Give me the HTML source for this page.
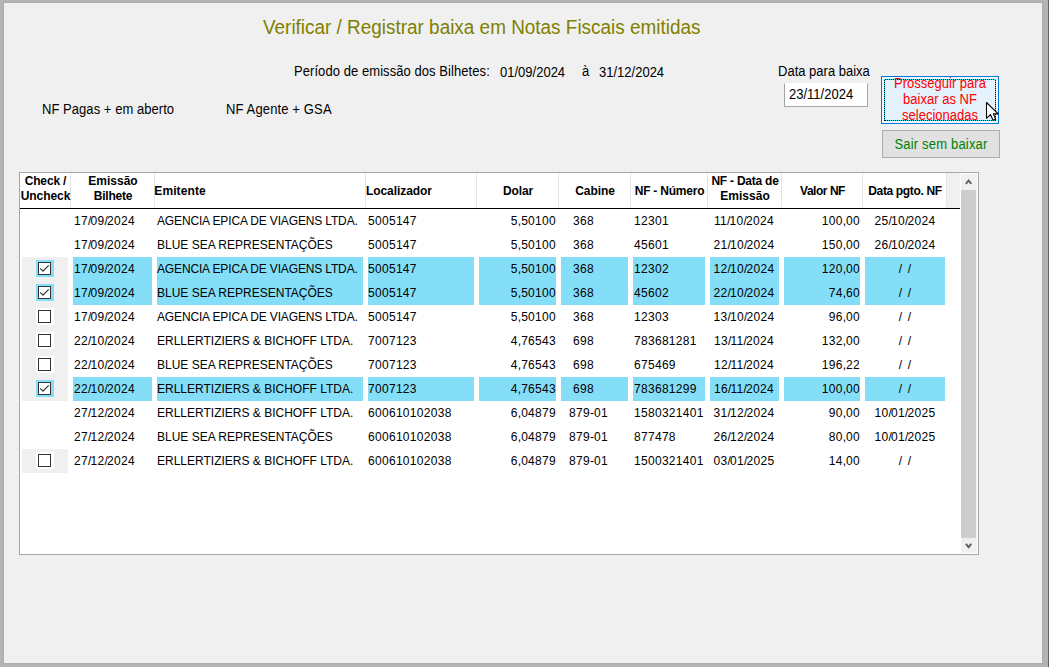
<!DOCTYPE html>
<html><head><meta charset="utf-8"><style>
*{margin:0;padding:0;box-sizing:border-box}
html,body{width:1050px;height:667px;overflow:hidden;background:#b4b4b4;font-family:"Liberation Sans",sans-serif;color:#000}
.a{position:absolute}
.t{position:absolute;white-space:pre;line-height:16px}
.hd{position:absolute;font-weight:bold;font-size:12px;line-height:15px;letter-spacing:-0.35px;text-align:center;white-space:pre}
.c{position:absolute;white-space:pre;font-size:12px;line-height:24px;height:24px}
.d{letter-spacing:0.3px}
.sl{letter-spacing:-0.8px}
</style></head><body>

<div class="a" style="left:3px;top:2px;width:1040px;height:662px;background:#adadad"></div>
<div class="a" style="left:4px;top:3px;width:1038px;height:660px;background:#f3f3f3"></div>
<div class="a" style="left:5px;top:4px;width:1036px;height:658px;background:#f0f0f0"></div>
<div class="a" style="left:1048px;top:0;width:1px;height:667px;background:#646464"></div>
<div class="a" style="left:1049px;top:0;width:1px;height:667px;background:#fff"></div>
<div class="t" style="left:262.7px;top:16px;font-size:20px;line-height:22px;color:#808000;transform:scaleX(0.946);transform-origin:0 0">Verificar / Registrar baixa em Notas Fiscais emitidas</div>
<div class="t" style="left:294px;top:63px;font-size:14px;transform:scaleX(0.929);transform-origin:0 0;letter-spacing:0.07px">Período de emissão dos Bilhetes:</div>
<div class="t" style="left:500px;top:64px;font-size:14px;transform:scaleX(0.929);transform-origin:0 0">01/09/2024</div>
<div class="t" style="left:582px;top:63px;font-size:14px;transform:scaleX(0.929);transform-origin:0 0">à</div>
<div class="t" style="left:599px;top:64px;font-size:14px;transform:scaleX(0.929);transform-origin:0 0">31/12/2024</div>
<div class="t" style="left:42px;top:101px;font-size:14px;transform:scaleX(0.929);transform-origin:0 0;letter-spacing:0.05px">NF Pagas + em aberto</div>
<div class="t" style="left:226px;top:101px;font-size:14px;transform:scaleX(0.929);transform-origin:0 0;letter-spacing:0.14px">NF Agente + GSA</div>
<div class="t" style="left:778px;top:63px;font-size:14px;transform:scaleX(0.929);transform-origin:0 0">Data para baixa</div>
<div class="a" style="left:784px;top:83px;width:84px;height:24px;background:#fff;border:1px solid #a3a3a8;border-top-color:#fff"></div>
<div class="t" style="left:789px;top:86px;font-size:14px;transform:scaleX(0.929);transform-origin:0 0">23/11/2024</div>
<div class="a" style="left:881px;top:76px;width:118px;height:48px;background:#e5f1fb;border:1px solid #0078d7"></div>
<div class="a" style="left:882px;top:77px;width:116px;height:46px;background:#f2f8fd"></div>
<div class="a" style="left:884px;top:79px;width:112px;height:42px;background:#e5f1fb"></div>
<div class="a" style="left:884px;top:79px;width:112px;height:1px;background:repeating-linear-gradient(90deg,#1ee8ee 0 1px,#000 1px 2px)"></div>
<div class="a" style="left:884px;top:120px;width:112px;height:1px;background:repeating-linear-gradient(90deg,#1ee8ee 0 1px,#000 1px 2px)"></div>
<div class="a" style="left:884px;top:79px;width:1px;height:42px;background:repeating-linear-gradient(180deg,#1ee8ee 0 1px,#000 1px 2px)"></div>
<div class="a" style="left:995px;top:79px;width:1px;height:42px;background:repeating-linear-gradient(180deg,#1ee8ee 0 1px,#000 1px 2px)"></div>
<div class="t" style="left:881px;top:75px;width:127px;font-size:14px;line-height:16px;text-align:center;color:#ff0000;transform:scaleX(0.929);transform-origin:0 0">Prosseguir para
baixar as NF
selecionadas</div>
<svg class="a" style="left:985px;top:101px" width="16" height="22"><path d="M1.5,1.5 L1.5,17.3 L5.4,13.6 L8.1,19.3 L10.6,18.2 L8.3,12.9 L13.2,12.9 Z" fill="#fff" stroke="#000" stroke-width="1.1" stroke-linejoin="round"/></svg>
<div class="a" style="left:882px;top:130px;width:118px;height:28px;background:#e1e1e1;border:1px solid #adadad"></div>
<div class="t" style="left:881.5px;top:136px;width:127px;font-size:14px;text-align:center;color:#008000;transform:scaleX(0.929);transform-origin:0 0;letter-spacing:0.2px">Sair sem baixar</div>
<div class="a" style="left:19px;top:172px;width:960px;height:383px;background:#fff;border:1px solid #a5a5ac"></div>
<div class="a" style="left:70px;top:173px;width:1px;height:34px;background:#e4e4e4"></div>
<div class="a" style="left:154px;top:173px;width:1px;height:34px;background:#e4e4e4"></div>
<div class="a" style="left:365px;top:173px;width:1px;height:34px;background:#e4e4e4"></div>
<div class="a" style="left:476px;top:173px;width:1px;height:34px;background:#e4e4e4"></div>
<div class="a" style="left:558px;top:173px;width:1px;height:34px;background:#e4e4e4"></div>
<div class="a" style="left:630px;top:173px;width:1px;height:34px;background:#e4e4e4"></div>
<div class="a" style="left:707px;top:173px;width:1px;height:34px;background:#e4e4e4"></div>
<div class="a" style="left:781px;top:173px;width:1px;height:34px;background:#e4e4e4"></div>
<div class="a" style="left:862px;top:173px;width:1px;height:34px;background:#e4e4e4"></div>
<div class="a" style="left:946px;top:173px;width:1px;height:34px;background:#e4e4e4"></div>
<div class="a" style="left:947px;top:173px;width:13px;height:35px;background:#f0f0f0"></div>
<div class="a" style="left:20px;top:208px;width:940px;height:1px;background:#000"></div>
<div class="hd" style="left:20px;top:173.5px;width:51px;letter-spacing:-0.15px">Check /</div>
<div class="hd" style="left:20px;top:188.5px;width:51px;letter-spacing:-0.05px">Uncheck</div>
<div class="hd" style="left:71px;top:173.5px;width:84px;letter-spacing:0.0px">Emissão</div>
<div class="hd" style="left:71px;top:188.5px;width:84px;letter-spacing:-0.2px">Bilhete</div>
<div class="hd" style="left:154.3px;top:184.0px;text-align:left;letter-spacing:0.1px">Emitente</div>
<div class="hd" style="left:366px;top:184.0px;text-align:left;letter-spacing:-0.07px">Localizador</div>
<div class="hd" style="left:477px;top:184.0px;width:82px;letter-spacing:-0.15px">Dolar</div>
<div class="hd" style="left:559px;top:184.0px;width:72px;letter-spacing:-0.05px">Cabine</div>
<div class="hd" style="left:631px;top:184.0px;width:77px;letter-spacing:-0.22px">NF - Número</div>
<div class="hd" style="left:708px;top:173.5px;width:74px;letter-spacing:-0.23px">NF - Data de</div>
<div class="hd" style="left:708px;top:188.5px;width:74px;letter-spacing:0.02px">Emissão</div>
<div class="hd" style="left:782px;top:184.0px;width:81px;letter-spacing:-0.47px">Valor NF</div>
<div class="hd" style="left:863px;top:184.0px;width:84px;letter-spacing:-0.35px">Data pgto. NF</div>
<div class="c" style="left:74px;top:209px"><span class="d">17</span><span class="sl">/</span><span class="d">09</span><span class="sl">/</span><span class="d">2024</span></div>
<div class="c" style="left:157px;top:209px;letter-spacing:-0.15px">AGENCIA EPICA DE VIAGENS LTDA.</div>
<div class="c" style="left:368px;top:209px"><span class="d">5005147</span></div>
<div class="c" style="left:477px;top:209px;width:79px;text-align:right"><span class="d">5</span>,<span class="d">50100</span></div>
<div class="c" style="left:573px;top:209px"><span class="d">368</span></div>
<div class="c" style="left:634px;top:209px"><span class="d">12301</span></div>
<div class="c" style="left:707px;top:209px;width:74px;text-align:center"><span class="d">11</span><span class="sl">/</span><span class="d">10</span><span class="sl">/</span><span class="d">2024</span></div>
<div class="c" style="left:782px;top:209px;width:78px;text-align:right"><span class="d">100</span>,<span class="d">00</span></div>
<div class="c" style="left:863px;top:209px;width:84px;text-align:center"><span class="d">25</span><span class="sl">/</span><span class="d">10</span><span class="sl">/</span><span class="d">2024</span></div>
<div class="c" style="left:74px;top:233px"><span class="d">17</span><span class="sl">/</span><span class="d">09</span><span class="sl">/</span><span class="d">2024</span></div>
<div class="c" style="left:157px;top:233px">BLUE SEA REPRESENTAÇÕES</div>
<div class="c" style="left:368px;top:233px"><span class="d">5005147</span></div>
<div class="c" style="left:477px;top:233px;width:79px;text-align:right"><span class="d">5</span>,<span class="d">50100</span></div>
<div class="c" style="left:573px;top:233px"><span class="d">368</span></div>
<div class="c" style="left:634px;top:233px"><span class="d">45601</span></div>
<div class="c" style="left:707px;top:233px;width:74px;text-align:center"><span class="d">21</span><span class="sl">/</span><span class="d">10</span><span class="sl">/</span><span class="d">2024</span></div>
<div class="c" style="left:782px;top:233px;width:78px;text-align:right"><span class="d">150</span>,<span class="d">00</span></div>
<div class="c" style="left:863px;top:233px;width:84px;text-align:center"><span class="d">26</span><span class="sl">/</span><span class="d">10</span><span class="sl">/</span><span class="d">2024</span></div>
<div class="a" style="left:22px;top:257px;width:46px;height:24px;background:#f0f0f0"></div>
<div class="a" style="left:36px;top:260px;width:18px;height:17px;background:#85def8"></div>
<svg class="a" style="left:38px;top:262px" width="13" height="13"><rect x="0.5" y="0.5" width="12" height="12" fill="#fff" stroke="#333"/><polyline points="2.2,6.4 5,9.2 10.7,3.4" fill="none" stroke="#333" stroke-width="1.25"/></svg>
<div class="a" style="left:73px;top:257px;width:79px;height:24px;background:#85def8"></div>
<div class="a" style="left:157px;top:257px;width:206px;height:24px;background:#85def8"></div>
<div class="a" style="left:368px;top:257px;width:106px;height:24px;background:#85def8"></div>
<div class="a" style="left:479px;top:257px;width:77px;height:24px;background:#85def8"></div>
<div class="a" style="left:561px;top:257px;width:67px;height:24px;background:#85def8"></div>
<div class="a" style="left:633px;top:257px;width:72px;height:24px;background:#85def8"></div>
<div class="a" style="left:710px;top:257px;width:69px;height:24px;background:#85def8"></div>
<div class="a" style="left:784px;top:257px;width:76px;height:24px;background:#85def8"></div>
<div class="a" style="left:865px;top:257px;width:80px;height:24px;background:#85def8"></div>
<div class="c" style="left:74px;top:257px"><span class="d">17</span><span class="sl">/</span><span class="d">09</span><span class="sl">/</span><span class="d">2024</span></div>
<div class="c" style="left:157px;top:257px;letter-spacing:-0.15px">AGENCIA EPICA DE VIAGENS LTDA.</div>
<div class="c" style="left:368px;top:257px"><span class="d">5005147</span></div>
<div class="c" style="left:477px;top:257px;width:79px;text-align:right"><span class="d">5</span>,<span class="d">50100</span></div>
<div class="c" style="left:573px;top:257px"><span class="d">368</span></div>
<div class="c" style="left:634px;top:257px"><span class="d">12302</span></div>
<div class="c" style="left:707px;top:257px;width:74px;text-align:center"><span class="d">12</span><span class="sl">/</span><span class="d">10</span><span class="sl">/</span><span class="d">2024</span></div>
<div class="c" style="left:782px;top:257px;width:78px;text-align:right"><span class="d">120</span>,<span class="d">00</span></div>
<div class="c" style="left:863px;top:257px;width:84px;text-align:center">/<span style="display:inline-block;width:5.7px"></span>/</div>
<div class="a" style="left:22px;top:281px;width:46px;height:24px;background:#f0f0f0"></div>
<div class="a" style="left:36px;top:284px;width:18px;height:17px;background:#85def8"></div>
<svg class="a" style="left:38px;top:286px" width="13" height="13"><rect x="0.5" y="0.5" width="12" height="12" fill="#fff" stroke="#333"/><polyline points="2.2,6.4 5,9.2 10.7,3.4" fill="none" stroke="#333" stroke-width="1.25"/></svg>
<div class="a" style="left:73px;top:281px;width:79px;height:24px;background:#85def8"></div>
<div class="a" style="left:157px;top:281px;width:206px;height:24px;background:#85def8"></div>
<div class="a" style="left:368px;top:281px;width:106px;height:24px;background:#85def8"></div>
<div class="a" style="left:479px;top:281px;width:77px;height:24px;background:#85def8"></div>
<div class="a" style="left:561px;top:281px;width:67px;height:24px;background:#85def8"></div>
<div class="a" style="left:633px;top:281px;width:72px;height:24px;background:#85def8"></div>
<div class="a" style="left:710px;top:281px;width:69px;height:24px;background:#85def8"></div>
<div class="a" style="left:784px;top:281px;width:76px;height:24px;background:#85def8"></div>
<div class="a" style="left:865px;top:281px;width:80px;height:24px;background:#85def8"></div>
<div class="c" style="left:74px;top:281px"><span class="d">17</span><span class="sl">/</span><span class="d">09</span><span class="sl">/</span><span class="d">2024</span></div>
<div class="c" style="left:157px;top:281px">BLUE SEA REPRESENTAÇÕES</div>
<div class="c" style="left:368px;top:281px"><span class="d">5005147</span></div>
<div class="c" style="left:477px;top:281px;width:79px;text-align:right"><span class="d">5</span>,<span class="d">50100</span></div>
<div class="c" style="left:573px;top:281px"><span class="d">368</span></div>
<div class="c" style="left:634px;top:281px"><span class="d">45602</span></div>
<div class="c" style="left:707px;top:281px;width:74px;text-align:center"><span class="d">22</span><span class="sl">/</span><span class="d">10</span><span class="sl">/</span><span class="d">2024</span></div>
<div class="c" style="left:782px;top:281px;width:78px;text-align:right"><span class="d">74</span>,<span class="d">60</span></div>
<div class="c" style="left:863px;top:281px;width:84px;text-align:center">/<span style="display:inline-block;width:5.7px"></span>/</div>
<div class="a" style="left:22px;top:305px;width:46px;height:24px;background:#f0f0f0"></div>
<div class="a" style="left:36px;top:308px;width:18px;height:17px;background:#fff"></div>
<svg class="a" style="left:38px;top:310px" width="13" height="13"><rect x="0.5" y="0.5" width="12" height="12" fill="#fff" stroke="#333"/></svg>
<div class="c" style="left:74px;top:305px"><span class="d">17</span><span class="sl">/</span><span class="d">09</span><span class="sl">/</span><span class="d">2024</span></div>
<div class="c" style="left:157px;top:305px;letter-spacing:-0.15px">AGENCIA EPICA DE VIAGENS LTDA.</div>
<div class="c" style="left:368px;top:305px"><span class="d">5005147</span></div>
<div class="c" style="left:477px;top:305px;width:79px;text-align:right"><span class="d">5</span>,<span class="d">50100</span></div>
<div class="c" style="left:573px;top:305px"><span class="d">368</span></div>
<div class="c" style="left:634px;top:305px"><span class="d">12303</span></div>
<div class="c" style="left:707px;top:305px;width:74px;text-align:center"><span class="d">13</span><span class="sl">/</span><span class="d">10</span><span class="sl">/</span><span class="d">2024</span></div>
<div class="c" style="left:782px;top:305px;width:78px;text-align:right"><span class="d">96</span>,<span class="d">00</span></div>
<div class="c" style="left:863px;top:305px;width:84px;text-align:center">/<span style="display:inline-block;width:5.7px"></span>/</div>
<div class="a" style="left:22px;top:329px;width:46px;height:24px;background:#f0f0f0"></div>
<div class="a" style="left:36px;top:332px;width:18px;height:17px;background:#fff"></div>
<svg class="a" style="left:38px;top:334px" width="13" height="13"><rect x="0.5" y="0.5" width="12" height="12" fill="#fff" stroke="#333"/></svg>
<div class="c" style="left:74px;top:329px"><span class="d">22</span><span class="sl">/</span><span class="d">10</span><span class="sl">/</span><span class="d">2024</span></div>
<div class="c" style="left:157px;top:329px">ERLLERTIZIERS &amp; BICHOFF LTDA.</div>
<div class="c" style="left:368px;top:329px"><span class="d">7007123</span></div>
<div class="c" style="left:477px;top:329px;width:79px;text-align:right"><span class="d">4</span>,<span class="d">76543</span></div>
<div class="c" style="left:573px;top:329px"><span class="d">698</span></div>
<div class="c" style="left:634px;top:329px"><span class="d">783681281</span></div>
<div class="c" style="left:707px;top:329px;width:74px;text-align:center"><span class="d">13</span><span class="sl">/</span><span class="d">11</span><span class="sl">/</span><span class="d">2024</span></div>
<div class="c" style="left:782px;top:329px;width:78px;text-align:right"><span class="d">132</span>,<span class="d">00</span></div>
<div class="c" style="left:863px;top:329px;width:84px;text-align:center">/<span style="display:inline-block;width:5.7px"></span>/</div>
<div class="a" style="left:22px;top:353px;width:46px;height:24px;background:#f0f0f0"></div>
<div class="a" style="left:36px;top:356px;width:18px;height:17px;background:#fff"></div>
<svg class="a" style="left:38px;top:358px" width="13" height="13"><rect x="0.5" y="0.5" width="12" height="12" fill="#fff" stroke="#333"/></svg>
<div class="c" style="left:74px;top:353px"><span class="d">22</span><span class="sl">/</span><span class="d">10</span><span class="sl">/</span><span class="d">2024</span></div>
<div class="c" style="left:157px;top:353px">BLUE SEA REPRESENTAÇÕES</div>
<div class="c" style="left:368px;top:353px"><span class="d">7007123</span></div>
<div class="c" style="left:477px;top:353px;width:79px;text-align:right"><span class="d">4</span>,<span class="d">76543</span></div>
<div class="c" style="left:573px;top:353px"><span class="d">698</span></div>
<div class="c" style="left:634px;top:353px"><span class="d">675469</span></div>
<div class="c" style="left:707px;top:353px;width:74px;text-align:center"><span class="d">12</span><span class="sl">/</span><span class="d">11</span><span class="sl">/</span><span class="d">2024</span></div>
<div class="c" style="left:782px;top:353px;width:78px;text-align:right"><span class="d">196</span>,<span class="d">22</span></div>
<div class="c" style="left:863px;top:353px;width:84px;text-align:center">/<span style="display:inline-block;width:5.7px"></span>/</div>
<div class="a" style="left:22px;top:377px;width:46px;height:24px;background:#f0f0f0"></div>
<div class="a" style="left:36px;top:380px;width:18px;height:17px;background:#85def8"></div>
<svg class="a" style="left:38px;top:382px" width="13" height="13"><rect x="0.5" y="0.5" width="12" height="12" fill="#fff" stroke="#333"/><polyline points="2.2,6.4 5,9.2 10.7,3.4" fill="none" stroke="#333" stroke-width="1.25"/></svg>
<div class="a" style="left:73px;top:377px;width:79px;height:24px;background:#85def8"></div>
<div class="a" style="left:157px;top:377px;width:206px;height:24px;background:#85def8"></div>
<div class="a" style="left:368px;top:377px;width:106px;height:24px;background:#85def8"></div>
<div class="a" style="left:479px;top:377px;width:77px;height:24px;background:#85def8"></div>
<div class="a" style="left:561px;top:377px;width:67px;height:24px;background:#85def8"></div>
<div class="a" style="left:633px;top:377px;width:72px;height:24px;background:#85def8"></div>
<div class="a" style="left:710px;top:377px;width:69px;height:24px;background:#85def8"></div>
<div class="a" style="left:784px;top:377px;width:76px;height:24px;background:#85def8"></div>
<div class="a" style="left:865px;top:377px;width:80px;height:24px;background:#85def8"></div>
<div class="c" style="left:74px;top:377px"><span class="d">22</span><span class="sl">/</span><span class="d">10</span><span class="sl">/</span><span class="d">2024</span></div>
<div class="c" style="left:157px;top:377px">ERLLERTIZIERS &amp; BICHOFF LTDA.</div>
<div class="c" style="left:368px;top:377px"><span class="d">7007123</span></div>
<div class="c" style="left:477px;top:377px;width:79px;text-align:right"><span class="d">4</span>,<span class="d">76543</span></div>
<div class="c" style="left:573px;top:377px"><span class="d">698</span></div>
<div class="c" style="left:634px;top:377px"><span class="d">783681299</span></div>
<div class="c" style="left:707px;top:377px;width:74px;text-align:center"><span class="d">16</span><span class="sl">/</span><span class="d">11</span><span class="sl">/</span><span class="d">2024</span></div>
<div class="c" style="left:782px;top:377px;width:78px;text-align:right"><span class="d">100</span>,<span class="d">00</span></div>
<div class="c" style="left:863px;top:377px;width:84px;text-align:center">/<span style="display:inline-block;width:5.7px"></span>/</div>
<div class="c" style="left:74px;top:401px"><span class="d">27</span><span class="sl">/</span><span class="d">12</span><span class="sl">/</span><span class="d">2024</span></div>
<div class="c" style="left:157px;top:401px">ERLLERTIZIERS &amp; BICHOFF LTDA.</div>
<div class="c" style="left:368px;top:401px"><span class="d">600610102038</span></div>
<div class="c" style="left:477px;top:401px;width:79px;text-align:right"><span class="d">6</span>,<span class="d">04879</span></div>
<div class="c" style="left:569px;top:401px"><span class="d">879</span>-<span class="d">01</span></div>
<div class="c" style="left:634px;top:401px"><span class="d">1580321401</span></div>
<div class="c" style="left:707px;top:401px;width:74px;text-align:center"><span class="d">31</span><span class="sl">/</span><span class="d">12</span><span class="sl">/</span><span class="d">2024</span></div>
<div class="c" style="left:782px;top:401px;width:78px;text-align:right"><span class="d">90</span>,<span class="d">00</span></div>
<div class="c" style="left:863px;top:401px;width:84px;text-align:center"><span class="d">10</span><span class="sl">/</span><span class="d">01</span><span class="sl">/</span><span class="d">2025</span></div>
<div class="c" style="left:74px;top:425px"><span class="d">27</span><span class="sl">/</span><span class="d">12</span><span class="sl">/</span><span class="d">2024</span></div>
<div class="c" style="left:157px;top:425px">BLUE SEA REPRESENTAÇÕES</div>
<div class="c" style="left:368px;top:425px"><span class="d">600610102038</span></div>
<div class="c" style="left:477px;top:425px;width:79px;text-align:right"><span class="d">6</span>,<span class="d">04879</span></div>
<div class="c" style="left:569px;top:425px"><span class="d">879</span>-<span class="d">01</span></div>
<div class="c" style="left:634px;top:425px"><span class="d">877478</span></div>
<div class="c" style="left:707px;top:425px;width:74px;text-align:center"><span class="d">26</span><span class="sl">/</span><span class="d">12</span><span class="sl">/</span><span class="d">2024</span></div>
<div class="c" style="left:782px;top:425px;width:78px;text-align:right"><span class="d">80</span>,<span class="d">00</span></div>
<div class="c" style="left:863px;top:425px;width:84px;text-align:center"><span class="d">10</span><span class="sl">/</span><span class="d">01</span><span class="sl">/</span><span class="d">2025</span></div>
<div class="a" style="left:22px;top:449px;width:46px;height:24px;background:#f0f0f0"></div>
<div class="a" style="left:36px;top:452px;width:18px;height:17px;background:#fff"></div>
<svg class="a" style="left:38px;top:454px" width="13" height="13"><rect x="0.5" y="0.5" width="12" height="12" fill="#fff" stroke="#333"/></svg>
<div class="c" style="left:74px;top:449px"><span class="d">27</span><span class="sl">/</span><span class="d">12</span><span class="sl">/</span><span class="d">2024</span></div>
<div class="c" style="left:157px;top:449px">ERLLERTIZIERS &amp; BICHOFF LTDA.</div>
<div class="c" style="left:368px;top:449px"><span class="d">600610102038</span></div>
<div class="c" style="left:477px;top:449px;width:79px;text-align:right"><span class="d">6</span>,<span class="d">04879</span></div>
<div class="c" style="left:569px;top:449px"><span class="d">879</span>-<span class="d">01</span></div>
<div class="c" style="left:634px;top:449px"><span class="d">1500321401</span></div>
<div class="c" style="left:707px;top:449px;width:74px;text-align:center"><span class="d">03</span><span class="sl">/</span><span class="d">01</span><span class="sl">/</span><span class="d">2025</span></div>
<div class="c" style="left:782px;top:449px;width:78px;text-align:right"><span class="d">14</span>,<span class="d">00</span></div>
<div class="c" style="left:863px;top:449px;width:84px;text-align:center">/<span style="display:inline-block;width:5.7px"></span>/</div>
<div class="a" style="left:961px;top:174px;width:16px;height:379px;background:#f0f0f0"></div>
<div class="a" style="left:961px;top:190px;width:15px;height:348px;background:#cdcdcd"></div>
<svg class="a" style="left:961px;top:173px" width="17" height="17"><polyline points="4.9,10.9 7.6,7.5 10.3,10.9" fill="none" stroke="#606060" stroke-width="1.9"/></svg>
<svg class="a" style="left:961px;top:537px" width="17" height="17"><polyline points="4.9,6.8 7.6,10.2 10.3,6.8" fill="none" stroke="#606060" stroke-width="1.9"/></svg>
</body></html>
